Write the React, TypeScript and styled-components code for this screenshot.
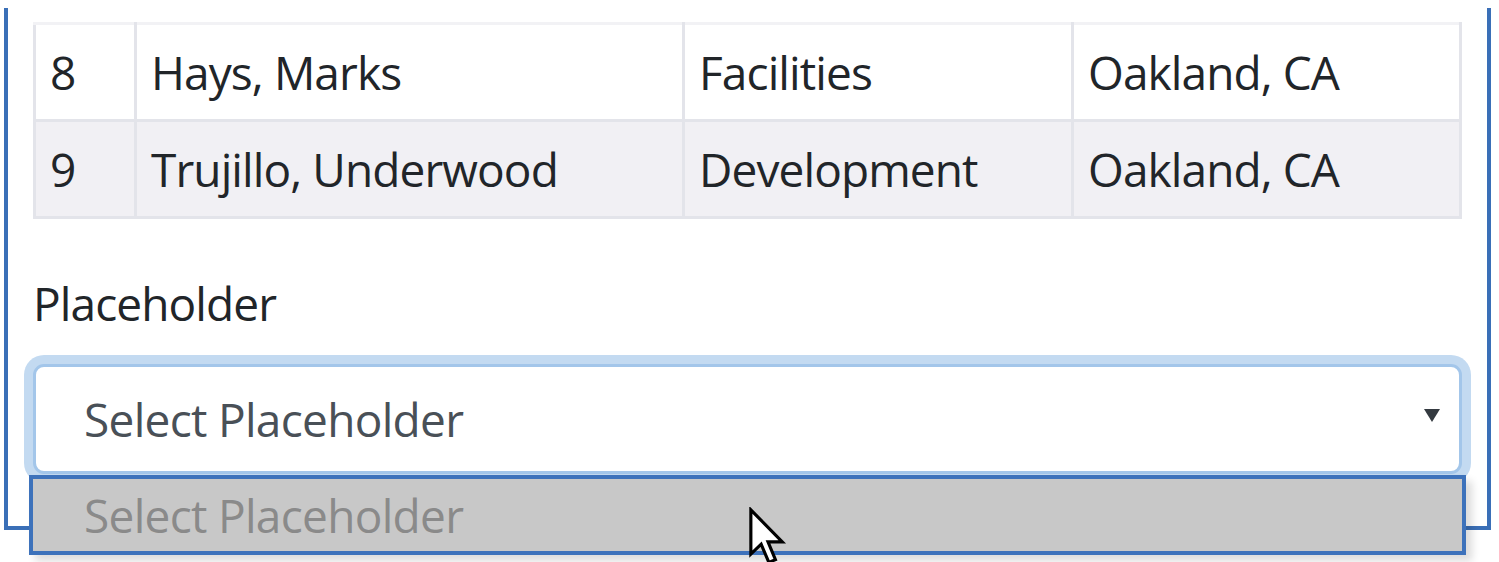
import React from "react";
import styled, { createGlobalStyle } from "styled-components";

const GlobalStyle = createGlobalStyle`
  html, body {
    margin: 0;
    padding: 0;
    height: 100%;
    background: #ffffff;
  }
  body {
    font-family: "Open Sans", "Noto Sans", Arial, sans-serif;
  }
  #root {
    min-height: 100%;
    overflow: hidden;
  }
`;

const Frame = styled.div`
  position: relative;
  box-sizing: border-box;
  width: 1487px;
  margin: 8px 0 0 4px;
  padding: 14px 25px 52px 25px;
  border: 4px solid #3a6fb7;
  border-top: none;
`;

const Table = styled.table`
  width: 100%;
  table-layout: fixed;
  border-collapse: collapse;
  font-size: 46px;
  letter-spacing: -0.9px;
  color: #212529;
`;

const Row = styled.tr<{ $striped?: boolean }>`
  background: ${(p) => (p.$striped ? "#f1f0f4" : "#ffffff")};
`;

const Cell = styled.td<{ $top?: boolean }>`
  height: 97px;
  box-sizing: border-box;
  padding: 0 14px;
  line-height: 69px;
  vertical-align: middle;
  border: 3px solid #e3e4ea;
  border-top-color: ${(p) => (p.$top ? "#f2f2f5" : "#e3e4ea")};
  white-space: nowrap;
`;

const Label = styled.div`
  margin: 50px 0 26px 0;
  font-size: 46px;
  line-height: 69px;
  letter-spacing: -0.9px;
  color: #212529;
`;

const SelectWrap = styled.div`
  position: relative;
`;

const SelectBox = styled.div`
  box-sizing: border-box;
  height: 110px;
  display: flex;
  align-items: center;
  justify-content: space-between;
  padding: 0 18px 0 48px;
  border: 3px solid #a3c6ea;
  border-radius: 11px;
  box-shadow: 0 0 0 9px #c3daf1;
  background: #ffffff;
  font-size: 46px;
  line-height: 69px;
  letter-spacing: -0.7px;
  color: #495057;
`;

const Arrow = styled.svg`
  width: 18px;
  height: 15px;
  margin-top: -8px;
`;

const DropList = styled.div`
  position: absolute;
  z-index: 2;
  top: calc(100% + 1px);
  left: -4px;
  right: -4px;
  box-sizing: border-box;
  height: 80px;
  display: flex;
  align-items: center;
  padding-left: 51px;
  background: #c8c8c8;
  border: 4px solid #3d72bb;
  box-shadow: 6px 6px 8px rgba(0, 0, 0, 0.14);
  font-size: 46px;
  line-height: 69px;
  letter-spacing: -0.7px;
  color: #8a8a8a;
`;

const Cursor = styled.svg`
  position: absolute;
  left: 715px;
  top: 28px;
  width: 40px;
  height: 60px;
`;

const rows = [
  { id: "8", name: "Hays, Marks", dept: "Facilities", city: "Oakland, CA" },
  { id: "9", name: "Trujillo, Underwood", dept: "Development", city: "Oakland, CA" },
];

export default function App() {
  return (
    <>
      <GlobalStyle />
      <Frame>
        <Table>
          <colgroup>
            <col style={{ width: 101 }} />
            <col style={{ width: 548 }} />
            <col style={{ width: 389 }} />
            <col />
          </colgroup>
          <tbody>
            {rows.map((r, i) => (
              <Row key={r.id} $striped={i % 2 === 1}>
                <Cell $top={i === 0}>{r.id}</Cell>
                <Cell $top={i === 0}>{r.name}</Cell>
                <Cell $top={i === 0}>{r.dept}</Cell>
                <Cell $top={i === 0}>{r.city}</Cell>
              </Row>
            ))}
          </tbody>
        </Table>
        <Label>Placeholder</Label>
        <SelectWrap>
          <SelectBox>
            <span>Select Placeholder</span>
            <Arrow viewBox="0 0 18 15">
              <path d="M1 1 H17 L9 14 Z" fill="#343a40" />
            </Arrow>
          </SelectBox>
          <DropList>
            Select Placeholder
            <Cursor viewBox="0 0 14 21">
              <path
                d="M1 1 V16.5 L4.6 13 L7.3 19.4 L9.6 18.4 L7 12.2 H12 Z"
                fill="#ffffff"
                stroke="#000000"
                strokeWidth="1.1"
                strokeLinejoin="miter"
              />
            </Cursor>
          </DropList>
        </SelectWrap>
      </Frame>
    </>
  );
}
